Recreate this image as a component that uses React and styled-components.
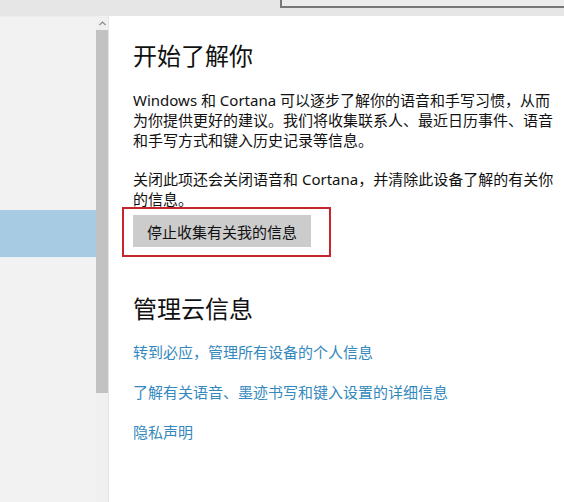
import React from "react";
import styled, { createGlobalStyle } from "styled-components";

const GlobalStyle = createGlobalStyle`
  html, body {
    margin: 0;
    padding: 0;
    height: 100%;
    overflow: hidden;
  }
  body {
    font-family: "Noto Sans", "Noto Sans CJK SC", sans-serif;
    color: #111;
  }
`;

const App = () => {
  return (
    <Page>
      <GlobalStyle />
      <TopBar>
        <SearchBox />
      </TopBar>
      <Main>
        <Sidebar>
          <NavItem />
          <NavItem />
          <NavItem />
          <NavItem />
          <NavItem selected />
          <NavItem />
        </Sidebar>
        <ScrollTrack>
          <ArrowUp>
            <svg width="7" height="5" viewBox="0 0 7 5">
              <path d="M0.5 4 L3.5 1 L6.5 4" fill="none" stroke="#8a8a8a" strokeWidth="1.2" />
            </svg>
          </ArrowUp>
          <Thumb />
        </ScrollTrack>
        <Content>
          <Title>开始了解你</Title>
          <Para>
            Windows 和 Cortana 可以逐步了解你的语音和手写习惯，从而
            <br />
            为你提供更好的建议。我们将收集联系人、最近日历事件、语音
            <br />
            和手写方式和键入历史记录等信息。
          </Para>
          <Para tight>
            关闭此项还会关闭语音和 Cortana，并清除此设备了解的有关你
            <br />
            的信息。
          </Para>
          <Highlight>
            <Button>停止收集有关我的信息</Button>
          </Highlight>
          <Title second>管理云信息</Title>
          <Links>
            <LinkText>转到必应，管理所有设备的个人信息</LinkText>
            <LinkText>了解有关语音、墨迹书写和键入设置的详细信息</LinkText>
            <LinkText>隐私声明</LinkText>
          </Links>
        </Content>
      </Main>
    </Page>
  );
};

export default App;

const Page = styled.div`
  display: flex;
  flex-direction: column;
  width: 100vw;
  height: 100vh;
  background: #fff;
`;

const TopBar = styled.div`
  display: flex;
  height: 16px;
  padding-left: 280px;
  background: #e6e6e6;
  flex-shrink: 0;
`;

const SearchBox = styled.div`
  flex: 1;
  height: 6px;
  background: #ececec;
  border-left: 2px solid #777;
  border-bottom: 2px solid #777;
`;

const Main = styled.div`
  flex: 1;
  display: flex;
  min-height: 0;
`;

const Sidebar = styled.div`
  width: 96px;
  flex-shrink: 0;
  padding-top: 1px;
  background: #f2f2f2;
  border-top: 1px solid #ececec;
`;

const NavItem = styled.div`
  height: 48px;
  background: ${(p) => (p.selected ? "#a7cbe2" : "transparent")};
  border-bottom: 1px solid ${(p) => (p.selected ? "#e6f0f6" : "transparent")};
  box-sizing: border-box;
`;

const ScrollTrack = styled.div`
  width: 12px;
  flex-shrink: 0;
  display: flex;
  flex-direction: column;
  background: #f0f0f0;
  border-right: 1px solid #e4e4e4;
`;

const ArrowUp = styled.div`
  height: 13px;
  display: flex;
  align-items: center;
  justify-content: center;
  padding-top: 1px;
`;

const Thumb = styled.div`
  height: 363px;
  background: #c2c2c2;
`;

const Content = styled.div`
  flex: 1;
  padding: 24px 0 0 24px;
  background: #fff;
`;

const Title = styled.h2`
  margin: ${(p) => (p.second ? "36px" : "0")} 0 0;
  font-size: 24px;
  line-height: 32px;
  font-weight: 400;
  color: #111;
`;

const Para = styled.p`
  margin: ${(p) => (p.tight ? "19px" : "18px")} 0 0;
  font-size: 15px;
  line-height: 20px;
  color: #111;
  white-space: nowrap;
`;

const Highlight = styled.div`
  display: inline-flex;
  align-self: flex-start;
  margin: -2px 0 0 -11px;
  padding: 6px 18px 8px 9px;
  border: 2px solid #c4262e;
`;

const Button = styled.button`
  width: 178px;
  height: 32px;
  border: none;
  background: #cccccc;
  font-family: "Noto Sans", "Noto Sans CJK SC", sans-serif;
  font-size: 15px;
  color: #111;
  padding: 0;
`;

const Links = styled.div`
  display: flex;
  flex-direction: column;
  gap: 20px;
  margin-top: 17px;
`;

const LinkText = styled.a`
  font-size: 15px;
  line-height: 20px;
  color: #3389bd;
  text-decoration: none;
`;
